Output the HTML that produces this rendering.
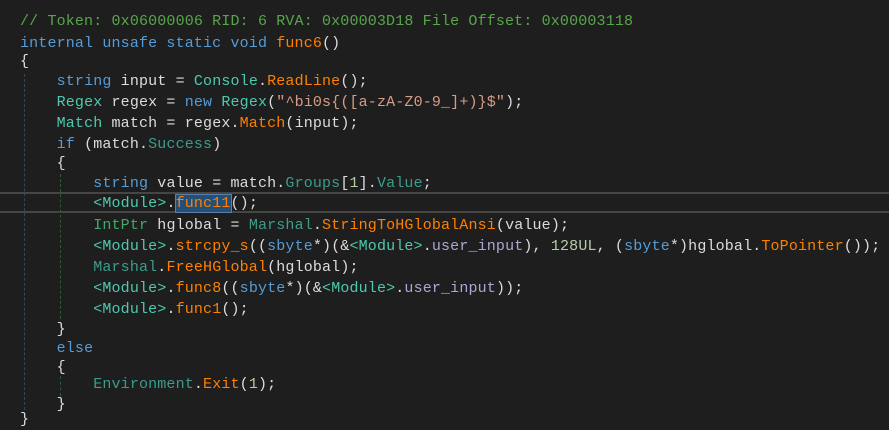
<!DOCTYPE html>
<html><head><meta charset="utf-8"><style>
html,body{margin:0;padding:0;background:#1e1e1e;width:889px;height:426px;overflow:hidden}
#w{position:absolute;left:0;top:2px;width:889px;height:424px}
.l{position:absolute;left:20px;font-family:"Liberation Mono",monospace;font-size:15px;letter-spacing:0.15px;line-height:20px;height:20px;color:#dcdcdc;white-space:pre}
.k{color:#569cd6}.t{color:#4ec9b0}.g{color:#3cab6a}.m{color:#ff8000}.c{color:#57a64a}.s{color:#d69d85}.f{color:#a8a8d0}.n{color:#b5cea8}.p{color:#3c9c8c}
.hl{position:absolute;left:0;width:889px;top:192px;height:21px;border-top:2px solid #464646;border-bottom:2px solid #464646;box-sizing:border-box}
.sel{background:#264f78;outline:1px solid #5a7fa8}
.ig{position:absolute;width:0;border-left:1px dashed}
</style></head><body>
<div class="hl"></div>
<div id="w">
<div class="ig" style="left:24px;top:72px;height:336px;border-color:#2a4a66"></div>
<div class="ig" style="left:60px;top:172px;height:145px;border-color:#2a5a36"></div>
<div class="ig" style="left:60px;top:374px;height:20px;border-color:#2a5a36"></div>
<div class="l" style="top:10px"><span class="c">// Token: 0x06000006 RID: 6 RVA: 0x00003D18 File Offset: 0x00003118</span></div>
<div class="l" style="top:32px"><span class="k">internal unsafe static void</span> <span class="m">func6</span>()</div>
<div class="l" style="top:50px">{</div>
<div class="l" style="top:70px">    <span class="k">string</span> input = <span class="t">Console</span>.<span class="m">ReadLine</span>();</div>
<div class="l" style="top:91px">    <span class="t">Regex</span> regex = <span class="k">new</span> <span class="t">Regex</span>(<span class="s">"^bi0s{([a-zA-Z0-9_]+)}$"</span>);</div>
<div class="l" style="top:112px">    <span class="t">Match</span> match = regex.<span class="m">Match</span>(input);</div>
<div class="l" style="top:133px">    <span class="k">if</span> (match.<span class="p">Success</span>)</div>
<div class="l" style="top:152px">    {</div>
<div class="l" style="top:172px">        <span class="k">string</span> value = match.<span class="p">Groups</span>[<span class="n">1</span>].<span class="p">Value</span>;</div>
<div class="l" style="top:192px">        <span class="t">&lt;Module&gt;</span>.<span class="m sel">func11</span>();</div>
<div class="l" style="top:214px">        <span class="g">IntPtr</span> hglobal = <span class="p">Marshal</span>.<span class="m">StringToHGlobalAnsi</span>(value);</div>
<div class="l" style="top:235px">        <span class="t">&lt;Module&gt;</span>.<span class="m">strcpy_s</span>((<span class="k">sbyte</span>*)(&amp;<span class="t">&lt;Module&gt;</span>.<span class="f">user_input</span>), <span class="n">128UL</span>, (<span class="k">sbyte</span>*)hglobal.<span class="m">ToPointer</span>());</div>
<div class="l" style="top:256px">        <span class="p">Marshal</span>.<span class="m">FreeHGlobal</span>(hglobal);</div>
<div class="l" style="top:277px">        <span class="t">&lt;Module&gt;</span>.<span class="m">func8</span>((<span class="k">sbyte</span>*)(&amp;<span class="t">&lt;Module&gt;</span>.<span class="f">user_input</span>));</div>
<div class="l" style="top:298px">        <span class="t">&lt;Module&gt;</span>.<span class="m">func1</span>();</div>
<div class="l" style="top:318px">    }</div>
<div class="l" style="top:337px">    <span class="k">else</span></div>
<div class="l" style="top:356px">    {</div>
<div class="l" style="top:373px">        <span class="p">Environment</span>.<span class="m">Exit</span>(<span class="n">1</span>);</div>
<div class="l" style="top:393px">    }</div>
<div class="l" style="top:408px">}</div>
</div>
</body></html>
